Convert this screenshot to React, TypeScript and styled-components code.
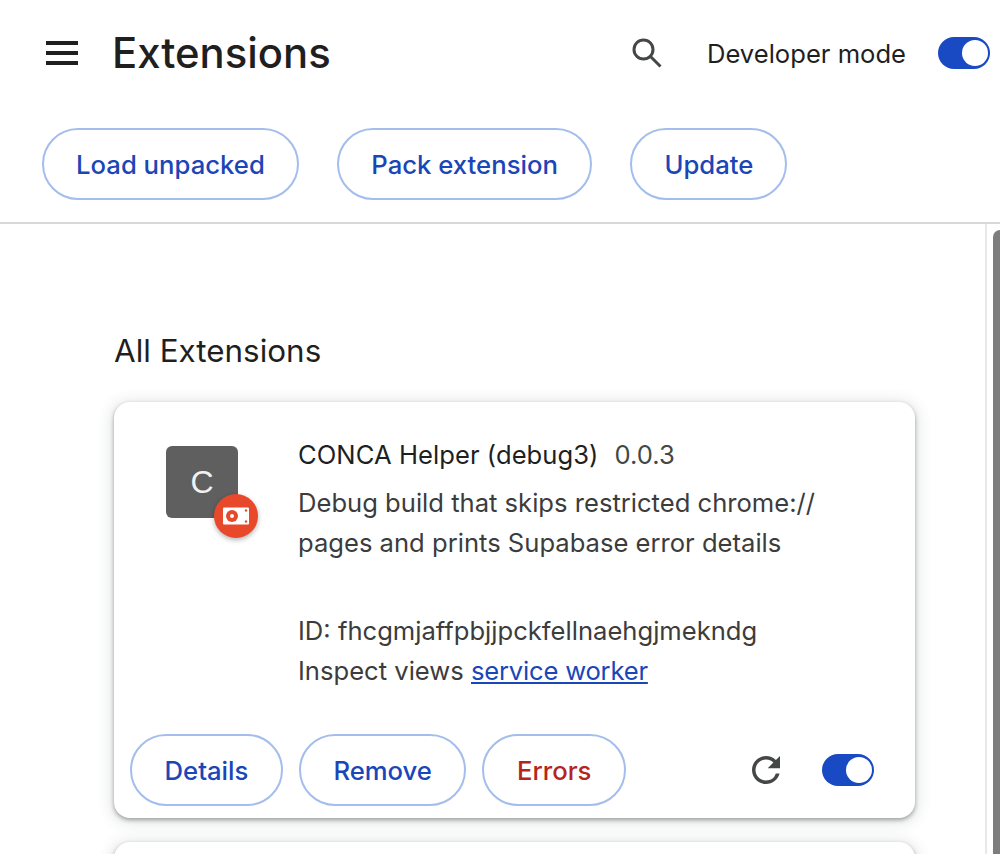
import { createGlobalStyle, styled } from "styled-components";

const GlobalStyle = createGlobalStyle`
    html, body {
        margin: 0;
        padding: 0;
        background: #fff;
        overflow: hidden;
    }
    body {
        font-family: Inter, "Liberation Sans", sans-serif;
        color: #1f1f1f;
    }
`;

const Page = styled.div`
    width: 1000px;
    height: 854px;
    overflow: hidden;
    display: flex;
    flex-direction: column;
`;

const Header = styled.header`
    height: 224px;
    flex-shrink: 0;
    box-sizing: border-box;
    border-bottom: 2px solid #d8d8d8;
    display: flex;
    flex-direction: column;
`;

const TopBar = styled.div`
    height: 128px;
    flex-shrink: 0;
    display: flex;
    align-items: center;
    padding: 0 10px 22px 46px;
    box-sizing: border-box;
`;

const MenuIcon = styled.svg`
    width: 32px;
    height: 24px;
    flex-shrink: 0;
    fill: #1f1f1f;
`;

const Title = styled.h1`
    margin: 0 0 0 34px;
    font-size: 41.8px;
    line-height: 48px;
    font-weight: 500;
    color: #1f1f1f;
    flex: 1;
`;

const SearchIcon = styled.svg`
    width: 30px;
    height: 30px;
    fill: none;
    stroke: #444746;
    stroke-width: 3;
    margin-right: 45px;
`;

const ModeLabel = styled.span`
    font-size: 25.6px;
    color: #1f1f1f;
    margin-right: 32px;
`;

const ToggleTrack = styled.div`
    width: 52px;
    height: 32px;
    border-radius: 16px;
    background: #1a49c4;
    display: flex;
    align-items: center;
    justify-content: flex-end;
    padding: 0 2px 0 0;
    box-sizing: border-box;
    flex-shrink: 0;
`;

const ToggleKnob = styled.div`
    width: 26px;
    height: 26px;
    border-radius: 50%;
    background: #fff;
`;

const Actions = styled.div`
    display: flex;
    gap: 38.5px;
    padding-left: 42px;
`;

const PillButton = styled.button<{ $danger?: boolean }>`
    height: 72px;
    padding: 0 32px;
    box-sizing: border-box;
    border-radius: 36px;
    border: 2px solid #a3bdec;
    background: #fff;
    font-family: inherit;
    font-size: 25.7px;
    font-weight: 500;
    color: ${(p) => (p.$danger ? "#b3261e" : "#1a46b8")};
`;

const CardButton = styled(PillButton)`
    padding: 0 32.5px;
`;

const Body = styled.div`
    flex: 1;
    display: flex;
    min-height: 0;
`;

const Main = styled.main`
    flex: 1;
    padding: 107px 0 0 114px;
    box-sizing: border-box;
`;

const SectionTitle = styled.h2`
    margin: 0 0 31px 0;
    font-size: 31.4px;
    line-height: 40px;
    font-weight: 400;
    color: #1f1f1f;
`;

const Card = styled.section<{ $stub?: boolean }>`
    width: 801px;
    height: ${(p) => (p.$stub ? "200px" : "416px")};
    margin-bottom: 24px;
    box-sizing: border-box;
    background: #fff;
    border-radius: 16px;
    box-shadow: 0 2px 4px rgba(60, 64, 67, 0.45), 0 2px 14px 4px rgba(60, 64, 67, 0.12);
    display: flex;
    flex-direction: column;
`;

const CardTop = styled.div`
    flex: 1;
    display: flex;
    padding: 44px 52px 0;
`;

const IconBox = styled.div`
    position: relative;
    width: 72px;
    height: 72px;
    border-radius: 6px;
    background: #5f5f5f;
    color: #f1f1f1;
    font-family: "Liberation Sans", sans-serif;
    font-size: 32px;
    display: flex;
    align-items: center;
    justify-content: center;
    margin-right: 60px;
    flex-shrink: 0;
`;

const Badge = styled.div`
    position: absolute;
    left: 48px;
    top: 48px;
    width: 44px;
    height: 44px;
    border-radius: 50%;
    background: #e8492a;
    box-shadow: 0 2px 5px rgba(0, 0, 0, 0.3);
    display: flex;
    align-items: center;
    justify-content: center;
`;

const Info = styled.div`
    flex: 1;
    font-size: 25.6px;
    line-height: 40px;
    color: #3c3c3c;
`;

const NameRow = styled.div`
    display: flex;
    gap: 16px;
    margin: -11px 0 8px;
`;

const Name = styled.span`
    color: #1f1f1f;
    letter-spacing: 0.05px;
`;

const Version = styled.span`
    color: #444746;
`;

const Description = styled.div`
    margin-bottom: 48px;
`;

const ViewLink = styled.a`
    color: #1a46b8;
    text-decoration: underline;
    letter-spacing: -0.2px;
`;

const CardFooter = styled.div`
    display: flex;
    align-items: center;
    gap: 16px;
    padding: 0 41px 12px 16px;
`;

const Spacer = styled.div`
    flex: 1;
`;

const ReloadIcon = styled.svg`
    width: 42px;
    height: 42px;
    fill: #444746;
    margin-right: 19px;
`;

const Scrollbar = styled.div`
    width: 15px;
    flex-shrink: 0;
    border-left: 2px solid #e8e8e8;
    padding: 6px 0 0 6px;
    box-sizing: border-box;
`;

const Thumb = styled.div`
    height: 100%;
    background: #7d7d7d;
    border-radius: 8px 0 0 0;
`;

export default function App() {
    return (
        <Page>
            <GlobalStyle />
            <Header>
                <TopBar>
                    <MenuIcon viewBox="0 0 32 24">
                        <rect y="0" width="32" height="4" />
                        <rect y="10" width="32" height="4" />
                        <rect y="20" width="32" height="4" />
                    </MenuIcon>
                    <Title>Extensions</Title>
                    <SearchIcon viewBox="0 0 30 30">
                        <circle cx="11.5" cy="11.5" r="9.5" />
                        <path d="M18.5 18.5 L28.5 28.5" />
                    </SearchIcon>
                    <ModeLabel>Developer mode</ModeLabel>
                    <ToggleTrack>
                        <ToggleKnob />
                    </ToggleTrack>
                </TopBar>
                <Actions>
                    <PillButton>Load unpacked</PillButton>
                    <PillButton>Pack extension</PillButton>
                    <PillButton>Update</PillButton>
                </Actions>
            </Header>
            <Body>
                <Main>
                    <SectionTitle>All Extensions</SectionTitle>
                    <Card>
                        <CardTop>
                            <IconBox>
                                C
                                <Badge>
                                    <svg width="28" height="20" viewBox="0 0 28 20">
                                        <rect x="1" y="1.5" width="26" height="17" rx="1" fill="#fff" />
                                        <circle cx="10" cy="10" r="6" fill="#e8492a" />
                                        <circle cx="10" cy="10" r="2" fill="#fff" />
                                        <circle cx="24" cy="4.5" r="1.2" fill="#e8492a" />
                                        <circle cx="24" cy="15.5" r="1.2" fill="#e8492a" />
                                    </svg>
                                </Badge>
                            </IconBox>
                            <Info>
                                <NameRow>
                                    <Name>CONCA Helper (debug3)</Name>
                                    <Version>0.0.3</Version>
                                </NameRow>
                                <Description>
                                    Debug build that skips restricted chrome://
                                    <br />
                                    pages and prints Supabase error details
                                </Description>
                                <div>ID: fhcgmjaffpbjjpckfellnaehgjmekndg</div>
                                <div>
                                    Inspect views <ViewLink>service worker</ViewLink>
                                </div>
                            </Info>
                        </CardTop>
                        <CardFooter>
                            <CardButton>Details</CardButton>
                            <CardButton>Remove</CardButton>
                            <CardButton $danger>Errors</CardButton>
                            <Spacer />
                            <ReloadIcon viewBox="0 0 24 24">
                                <path d="M17.65 6.35A7.958 7.958 0 0 0 12 4c-4.42 0-7.99 3.58-7.99 8s3.57 8 7.99 8c3.73 0 6.84-2.55 7.73-6h-2.08A5.99 5.99 0 0 1 12 18c-3.31 0-6-2.69-6-6s2.69-6 6-6c1.66 0 3.14.69 4.22 1.78L13 11h7V4l-2.35 2.35z" />
                            </ReloadIcon>
                            <ToggleTrack>
                                <ToggleKnob />
                            </ToggleTrack>
                        </CardFooter>
                    </Card>
                    <Card $stub />
                </Main>
                <Scrollbar>
                    <Thumb />
                </Scrollbar>
            </Body>
        </Page>
    );
}
